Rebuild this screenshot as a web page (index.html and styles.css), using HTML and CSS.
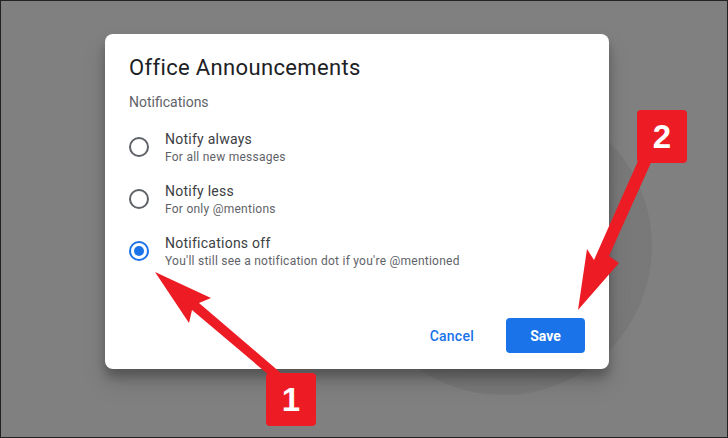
FILE: index.html
```html
<!DOCTYPE html>
<html lang="en">

<head>
  <meta charset="UTF-8">
  <meta name="viewport" content="width=device-width, initial-scale=1.0">
  <title>Office Announcements</title>
  <link rel="stylesheet" href="styles.css">
</head>

<body>

  <div class="stage">
    <div class="backdrop-circle"></div>

    <div class="dialog">
      <h1>Office Announcements</h1>
      <p class="section-label">Notifications</p>

      <div class="options">
        <label class="option">
          <span class="radio"></span>
          <span class="option-text">
            <span class="option-title">Notify always</span>
            <span class="option-desc">For all new messages</span>
          </span>
        </label>
        <label class="option">
          <span class="radio"></span>
          <span class="option-text">
            <span class="option-title">Notify less</span>
            <span class="option-desc">For only @mentions</span>
          </span>
        </label>
        <label class="option">
          <span class="radio checked"></span>
          <span class="option-text">
            <span class="option-title">Notifications off</span>
            <span class="option-desc">You'll still see a notification dot if you're @mentioned</span>
          </span>
        </label>
      </div>

      <div class="actions">
        <button class="btn-text">Cancel</button>
        <button class="btn-primary">Save</button>
      </div>
    </div>

    <!-- annotation arrows -->
    <svg class="arrows" width="728" height="438" viewBox="0 0 728 438">
      <polygon points="155,272 211,298 199,303 289,380 276,381 192,310 189,323" fill="#ed1c24" />
      <polygon points="578,310 587,249 594,260 642,152 654,156 609,256 619,263" fill="#ed1c24" />
    </svg>

    <div class="badge badge-one">1</div>
    <div class="badge badge-two">2</div>
  </div>

</body>

</html>
```

FILE: styles.css
```css
* {
  margin: 0;
  padding: 0;
  box-sizing: border-box;
}

body {
  font-family: Roboto, "Liberation Sans", sans-serif;
  background-color: #7f807f;
}

.stage {
  position: relative;
  width: 728px;
  height: 438px;
  border: 1px solid #222;
  background-color: #7f807f;
  padding: 33px 0 0 104px;
  overflow: hidden;
}

.backdrop-circle {
  position: absolute;
  left: 353px;
  top: 96px;
  width: 298px;
  height: 298px;
  border-radius: 50%;
  background: radial-gradient(circle, #7a7b7a 0, #777877 85%, #7b7c7b 100%);
}

.dialog {
  position: relative;
  width: 504px;
  height: 335px;
  background-color: #fff;
  border-radius: 8px;
  padding: 20px 24px 16px;
  box-shadow: 0 8px 10px rgba(0, 0, 0, 0.24), 0 14px 22px 2px rgba(0, 0, 0, 0.12);
}

h1 {
  font-size: 22px;
  line-height: 28px;
  font-weight: 400;
  letter-spacing: 0.35px;
  color: #202124;
}

.section-label {
  margin-top: 10px;
  font-size: 14px;
  line-height: 20px;
  color: #5f6368;
}

.options {
  margin-top: 17px;
  display: flex;
  flex-direction: column;
  gap: 16px;
}

.option {
  display: flex;
  align-items: center;
  gap: 16px;
}

.radio {
  width: 20px;
  height: 20px;
  border: 2px solid #5f6368;
  border-radius: 50%;
  display: flex;
  align-items: center;
  justify-content: center;
  flex-shrink: 0;
}

.radio.checked {
  border-color: #1a73e8;
}

.radio.checked::after {
  content: "";
  width: 10px;
  height: 10px;
  border-radius: 50%;
  background-color: #1a73e8;
}

.option-text {
  display: flex;
  flex-direction: column;
}

.option-title {
  font-size: 14px;
  line-height: 20px;
  letter-spacing: 0.25px;
  color: #3c4043;
}

.option-desc {
  font-size: 12px;
  line-height: 16px;
  letter-spacing: 0.25px;
  color: #5f6368;
}

.actions {
  margin-top: 49px;
  display: flex;
  justify-content: flex-end;
  align-items: center;
}

button {
  font-family: Roboto, "Liberation Sans", sans-serif;
  font-size: 14px;
  font-weight: 500;
  border: none;
  cursor: pointer;
}

.btn-text {
  background: none;
  color: #1a73e8;
  height: 35px;
  padding: 0 16px;
  margin-right: 16px;
  letter-spacing: 0.25px;
}

.btn-primary {
  background-color: #1a73e8;
  color: #fff;
  width: 79px;
  height: 35px;
  border-radius: 4px;
  font-weight: 700;
}

.arrows {
  position: absolute;
  left: -1px;
  top: -1px;
}

.badge {
  position: absolute;
  width: 50px;
  height: 53px;
  border-radius: 4px;
  background-color: #ed1c24;
  color: #fff;
  font-family: "Liberation Sans", Arial, sans-serif;
  font-weight: 700;
  font-size: 33px;
  display: flex;
  align-items: center;
  justify-content: center;
}

.badge-one {
  left: 265px;
  top: 372px;
}

.badge-two {
  left: 636px;
  top: 109px;
}
```
